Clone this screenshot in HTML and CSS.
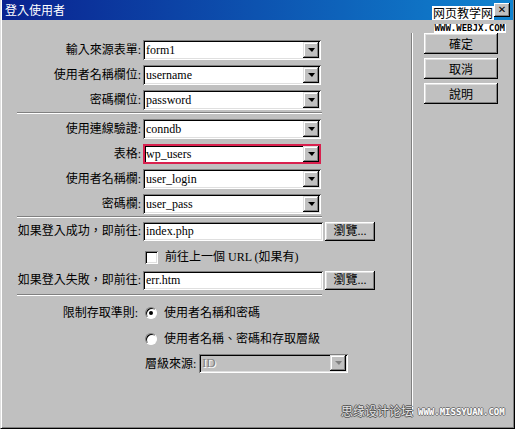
FILE: index.html
```html
<!DOCTYPE html>
<html lang="zh-Hant">
<head>
    <meta charset="UTF-8">
    <title>登入使用者</title>
    <link rel="stylesheet" href="styles.css">
</head>
<body>
    <div class="window">
        <div class="titlebar">
            <span class="title">登入使用者</span>
            <span class="close">✕</span>
        </div>

        <div class="content">
            <div class="panel">
                <!-- form and fields -->
                <div class="row first">
                    <span class="lbl">輸入來源表單:</span>
                    <div class="select"><span class="val">form1</span><span class="arrow"></span></div>
                </div>
                <div class="row">
                    <span class="lbl">使用者名稱欄位:</span>
                    <div class="select"><span class="val">username</span><span class="arrow"></span></div>
                </div>
                <div class="row">
                    <span class="lbl">密碼欄位:</span>
                    <div class="select"><span class="val">password</span><span class="arrow"></span></div>
                </div>

                <div class="sep"></div>

                <!-- connection -->
                <div class="row after-sep">
                    <span class="lbl">使用連線驗證:</span>
                    <div class="select"><span class="val">conndb</span><span class="arrow"></span></div>
                </div>
                <div class="row">
                    <span class="lbl">表格:</span>
                    <div class="select active"><span class="val">wp_users</span><span class="arrow"></span></div>
                </div>
                <div class="row">
                    <span class="lbl">使用者名稱欄:</span>
                    <div class="select"><span class="val">user_login</span><span class="arrow"></span></div>
                </div>
                <div class="row">
                    <span class="lbl">密碼欄:</span>
                    <div class="select"><span class="val">user_pass</span><span class="arrow"></span></div>
                </div>

                <div class="sep"></div>

                <!-- redirects -->
                <div class="row url-row">
                    <span class="lbl">如果登入成功，即前往:</span>
                    <div class="field">index.php</div>
                    <button class="btn small">瀏覽...</button>
                </div>
                <div class="row check-row">
                    <span class="lbl"></span>
                    <span class="check"></span>
                    <span class="opt">前往上一個 URL (如果有)</span>
                </div>
                <div class="row url-row2">
                    <span class="lbl">如果登入失敗，即前往:</span>
                    <div class="field">err.htm</div>
                    <button class="btn small">瀏覽...</button>
                </div>

                <div class="sep sep-last"></div>

                <!-- access rules -->
                <div class="row radio-row">
                    <span class="lbl lbl-short">限制存取準則:</span>
                    <span class="radio on"></span>
                    <span class="opt">使用者名稱和密碼</span>
                </div>
                <div class="row radio-row2">
                    <span class="lbl"></span>
                    <span class="radio"></span>
                    <span class="opt">使用者名稱、密碼和存取層級</span>
                </div>
                <div class="row level-row">
                    <span class="lbl"></span>
                    <span class="level-lbl">層級來源:</span>
                    <div class="select disabled"><span class="val">ID</span><span class="arrow"></span></div>
                </div>
            </div>

            <div class="buttons">
                <button class="btn">確定</button>
                <button class="btn">取消</button>
                <button class="btn">說明</button>
            </div>
        </div>

        <div class="mark-top">
            <span class="mark-cn">网页教学网</span>
            <span class="mark-url">WWW.WEBJX.COM</span>
        </div>
        <div class="mark-bottom">
            <span class="mark-cn2">思缘设计论坛</span>
            <span class="mark-url2">WWW.MISSYUAN.COM</span>
        </div>
    </div>
</body>
</html>
```

FILE: styles.css
```css
* {
    box-sizing: border-box;
}

body {
    margin: 0;
    background: #c0c0c0;
    font-family: "Liberation Serif", "Noto Sans CJK TC", serif;
    font-size: 12px;
    color: #000;
}

.window {
    position: relative;
    width: 515px;
    height: 429px;
    background: #c0c0c0;
    border-left: 1px solid #dfdfdf;
    border-right: 1px solid #000;
    border-bottom: 1px solid #000;
    box-shadow: inset 1px 0 0 #fff, inset -1px -1px 0 #808080;
}

.titlebar {
    display: flex;
    align-items: center;
    height: 20px;
    margin: 0 1px;
    padding: 0 3px 0 3px;
    background: linear-gradient(to right, #0a2290, #1084d0);
    color: #fff;
}

.title {
    font-family: "Noto Sans CJK TC", sans-serif;
    font-size: 12px;
    line-height: 20px;
}

.close {
    margin-left: auto;
    width: 16px;
    height: 14px;
    background: #c0c0c0;
    color: #000;
    font-family: "DejaVu Sans", sans-serif;
    font-size: 10px;
    font-weight: bold;
    line-height: 14px;
    text-align: center;
    box-shadow: inset -1px -1px 0 #000, inset 1px 1px 0 #fff, inset -2px -2px 0 #808080;
}

.content {
    display: flex;
    padding-left: 1px;
}

.panel {
    width: 410px;
    height: 384px;
    margin-top: 13px;
    padding-top: 7px;
    border-right: 1px solid #808080;
    box-shadow: 1px 0 0 #fff;
}

/* rows */
.row {
    display: flex;
    align-items: center;
    height: 20px;
    margin-top: 5px;
}

.row.first {
    margin-top: 0;
}

.row.after-sep {
    margin-top: 5px;
}

.lbl {
    flex: none;
    width: 139px;
    margin-right: 2px;
    text-align: right;
    line-height: 20px;
    white-space: nowrap;
}

.lbl-short {
    width: 136px;
    margin-right: 5px;
}

.sep {
    width: 305px;
    height: 2px;
    margin: 2px 0 0 15px;
    border-top: 1px solid #808080;
    border-bottom: 1px solid #fff;
}

/* dropdowns */
.select {
    display: flex;
    align-items: center;
    width: 178px;
    height: 20px;
    padding: 2px;
    background: #fff;
    box-shadow: inset 1px 1px 0 #808080, inset -1px -1px 0 #fff, inset 2px 2px 0 #000, inset -2px -2px 0 #dfdfdf;
}

.select .val {
    flex: 1;
    padding-left: 1px;
    font-size: 12px;
    line-height: 16px;
    white-space: nowrap;
}

.arrow {
    display: flex;
    align-items: center;
    justify-content: center;
    width: 16px;
    height: 16px;
    background: #c0c0c0;
    box-shadow: inset -1px -1px 0 #000, inset 1px 1px 0 #dfdfdf, inset -2px -2px 0 #808080, inset 2px 2px 0 #fff;
}

.arrow::after {
    content: "";
    border-left: 4px solid transparent;
    border-right: 3px solid transparent;
    border-top: 4px solid #000;
}

.select.active {
    box-shadow: inset 2px 2px 0 #d9204e, inset -2px -2px 0 #d9204e, inset 3px 3px 0 #000;
}

.select.disabled {
    width: 149px;
    height: 19px;
    background: #c0c0c0;
}

.select.disabled .val {
    font-size: 13px;
    color: #808080;
    text-shadow: 1px 1px 0 #fff;
}

.select.disabled .arrow::after {
    border-top-color: #808080;
}

/* text fields */
.field {
    width: 180px;
    height: 19px;
    padding: 2px 3px;
    background: #fff;
    font-size: 12px;
    line-height: 15px;
    box-shadow: inset 1px 1px 0 #808080, inset -1px -1px 0 #fff, inset 2px 2px 0 #000, inset -2px -2px 0 #dfdfdf;
}

.url-row {
    margin-top: 3px;
}

.check-row {
    margin-top: 6px;
}

.url-row2 {
    margin-top: 3px;
}

.sep-last {
    margin-top: 4px;
}

.radio-row {
    margin-top: 7px;
}

.radio-row2 {
    margin-top: 6px;
}

.level-row {
    margin-top: 4px;
}

.level-lbl {
    width: 53px;
    margin-left: -141px;
    margin-right: 1px;
    padding-left: 143px;
    box-sizing: content-box;
    white-space: nowrap;
}

.check {
    width: 13px;
    height: 13px;
    margin-left: 2px;
    background: #fff;
    box-shadow: inset 1px 1px 0 #808080, inset -1px -1px 0 #fff, inset 2px 2px 0 #000, inset -2px -2px 0 #dfdfdf;
}

.radio {
    position: relative;
    width: 12px;
    height: 12px;
    margin-left: 2px;
    border-radius: 50%;
    background: #fff;
    border: 1px solid;
    border-color: #808080 #fff #fff #808080;
    box-shadow: inset 1px 1px 0 #000;
}

.radio.on::after {
    content: "";
    position: absolute;
    left: 3px;
    top: 3px;
    width: 4px;
    height: 4px;
    border-radius: 50%;
    background: #000;
}

.opt {
    margin-left: 7px;
    line-height: 20px;
    white-space: nowrap;
}

/* buttons */
.btn {
    width: 74px;
    height: 21px;
    padding: 0;
    border: none;
    background: #c0c0c0;
    font-family: "Noto Sans CJK TC", sans-serif;
    font-size: 12px;
    line-height: 19px;
    color: #000;
    box-shadow: inset -1px -1px 0 #000, inset 1px 1px 0 #fff, inset -2px -2px 0 #808080, inset 2px 2px 0 #dfdfdf;
}

.btn.small {
    width: 50px;
    height: 19px;
    margin-left: 2px;
    font-family: "Liberation Serif", "Noto Sans CJK TC", serif;
    line-height: 17px;
}

.buttons {
    display: flex;
    flex-direction: column;
    gap: 4px;
    margin-top: 13px;
    margin-left: 12px;
}

/* watermarks laid over the dialog */
.mark-top {
    position: absolute;
    top: 6px;
    left: 431px;
    display: flex;
    flex-direction: column;
    align-items: flex-end;
}

.mark-cn {
    margin-right: 12px;
    padding: 0 1px;
    background: #fff;
    font-family: "Noto Sans CJK SC", sans-serif;
    font-size: 12px;
    line-height: 14px;
}

.mark-url {
    margin-top: 4px;
    padding: 0 1px;
    background: #fff;
    font-family: "DejaVu Sans Mono", monospace;
    font-size: 9px;
    font-weight: bold;
    line-height: 9px;
}

.mark-bottom {
    position: absolute;
    left: 340px;
    top: 403px;
    display: flex;
    align-items: flex-end;
    gap: 5px;
}

.mark-cn2 {
    font-family: "Noto Sans CJK SC", sans-serif;
    font-size: 12px;
    line-height: 15px;
    color: #e4e4e4;
    text-shadow: 1px 0 0 #555, -1px 0 0 #555, 0 1px 0 #555, 0 -1px 0 #555;
}

.mark-url2 {
    font-family: "DejaVu Sans Mono", monospace;
    font-size: 9px;
    font-weight: bold;
    line-height: 12px;
    color: #fff;
    text-shadow: 1px 0 0 #777, -1px 0 0 #777, 0 1px 0 #777, 0 -1px 0 #777;
}
```
